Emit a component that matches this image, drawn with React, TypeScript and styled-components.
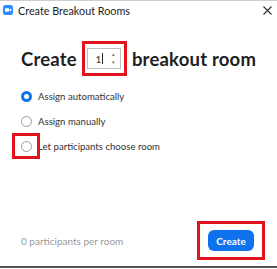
import React from "react";
import styled, { createGlobalStyle } from "styled-components";

const Global = createGlobalStyle`
  html, body { margin: 0; padding: 0; background: #fff; }
  body { font-family: Lato, "Noto Sans", sans-serif; }
  * { box-sizing: border-box; }
`;

const Window = styled.div`
  width: 277px;
  height: 268px;
  display: flex;
  flex-direction: column;
  background: #fff;
  border-top: 1px solid #cfcfcf;
  border-bottom: 2px solid #555;
`;

const TitleBar = styled.div`
  height: 18px;
  display: flex;
  align-items: center;
  padding: 0 5px 0 3px;
  gap: 5px;
`;

const TitleText = styled.span`
  flex: 1;
  font-size: 10.8px;
  color: #222;
`;

const Close = styled.span`
  display: flex;
  line-height: 1;
`;

const Body = styled.div`
  flex: 1;
  display: flex;
  flex-direction: column;
  padding: 22px 12px 0 21px;
`;

const Heading = styled.div`
  display: flex;
  align-items: center;
  gap: 4px;
  font-size: 18.5px;
  letter-spacing: 0.2px;
  font-weight: 700;
  color: #1f1f1f;
  white-space: nowrap;
  margin-bottom: 12px;
`;

const Highlight = styled.div`
  border: 3px solid #e3131e;
  display: inline-flex;
  align-items: center;
  justify-content: center;
`;

const SpinBox = styled(Highlight)`
  width: 45px;
  height: 35px;
  margin: 0 1px;
`;

const Spinner = styled.div`
  width: 34px;
  height: 21px;
  border: 1px solid #bdbdbd;
  display: flex;
  align-items: center;
  padding-left: 7px;
  font-size: 10px;
  font-weight: 400;
  letter-spacing: 0;
  color: #333;
  position: relative;
`;

const Caret = styled.span`
  width: 1px;
  height: 11px;
  background: #222;
  margin-left: 1px;
`;

const Arrows = styled.div`
  position: absolute;
  right: 5px;
  top: 4px;
  display: flex;
  flex-direction: column;
  gap: 5px;
  font-size: 5px;
  line-height: 3px;
  color: #666;
`;

const Options = styled.div`
  display: flex;
  flex-direction: column;
  gap: 9px;
`;

const Row = styled.div`
  display: flex;
  align-items: center;
  gap: 6px;
  height: 16px;
  font-size: 9.6px;
  color: #333;
  position: relative;
`;

const Radio = styled.span<{ $checked?: boolean }>`
  width: 11px;
  height: 11px;
  border-radius: 50%;
  border: ${(p) => (p.$checked ? "3px solid #0e72ed" : "1px solid #9a9a9a")};
  background: #fff;
  flex: none;
`;

const RadioMark = styled.div`
  position: absolute;
  left: -9px;
  top: -5px;
  width: 28px;
  height: 26px;
  border: 3px solid #e3131e;
  background: transparent;
`;

const Footer = styled.div`
  margin-top: auto;
  display: flex;
  align-items: center;
  justify-content: space-between;
  padding-bottom: 6px;
`;

const Note = styled.span`
  font-size: 10px;
  color: #9a9a9a;
`;

const ButtonBox = styled(Highlight)`
  width: 68px;
  height: 39px;
`;

const Button = styled.button`
  width: 46px;
  height: 21px;
  border: none;
  border-radius: 6px;
  background: #0e72ed;
  color: #fff;
  font-family: inherit;
  font-weight: 700;
  font-size: 10px;
  padding: 0;
`;

const ZoomIcon = () => (
  <svg width="10" height="10" viewBox="0 0 10 10">
    <rect x="0" y="0" width="10" height="10" rx="2.5" fill="#2d8cff" />
    <rect x="2" y="3.3" width="4" height="3.4" rx="0.6" fill="#fff" />
    <path d="M6.3 4.6 L8.2 3.4 V6.6 L6.3 5.4 Z" fill="#fff" />
  </svg>
);

const CloseIcon = () => (
  <svg width="9" height="9" viewBox="0 0 9 9">
    <path d="M0.5 0.5 L8.5 8.5 M8.5 0.5 L0.5 8.5" stroke="#333" strokeWidth="1.1" />
  </svg>
);

export default function App() {
  return (
    <>
      <Global />
      <Window>
        <TitleBar>
          <ZoomIcon />
          <TitleText>Create Breakout Rooms</TitleText>
          <Close>
            <CloseIcon />
          </Close>
        </TitleBar>
        <Body>
          <Heading>
            <span>Create</span>
            <SpinBox>
              <Spinner>
                1<Caret />
                <Arrows>
                  <span>▴</span>
                  <span>▾</span>
                </Arrows>
              </Spinner>
            </SpinBox>
            <span>breakout room</span>
          </Heading>
          <Options>
            <Row>
              <Radio $checked />
              Assign automatically
            </Row>
            <Row>
              <Radio />
              Assign manually
            </Row>
            <Row>
              <Radio />
              Let participants choose room
              <RadioMark />
            </Row>
          </Options>
          <Footer>
            <Note>0 participants per room</Note>
            <ButtonBox>
              <Button>Create</Button>
            </ButtonBox>
          </Footer>
        </Body>
      </Window>
    </>
  );
}
